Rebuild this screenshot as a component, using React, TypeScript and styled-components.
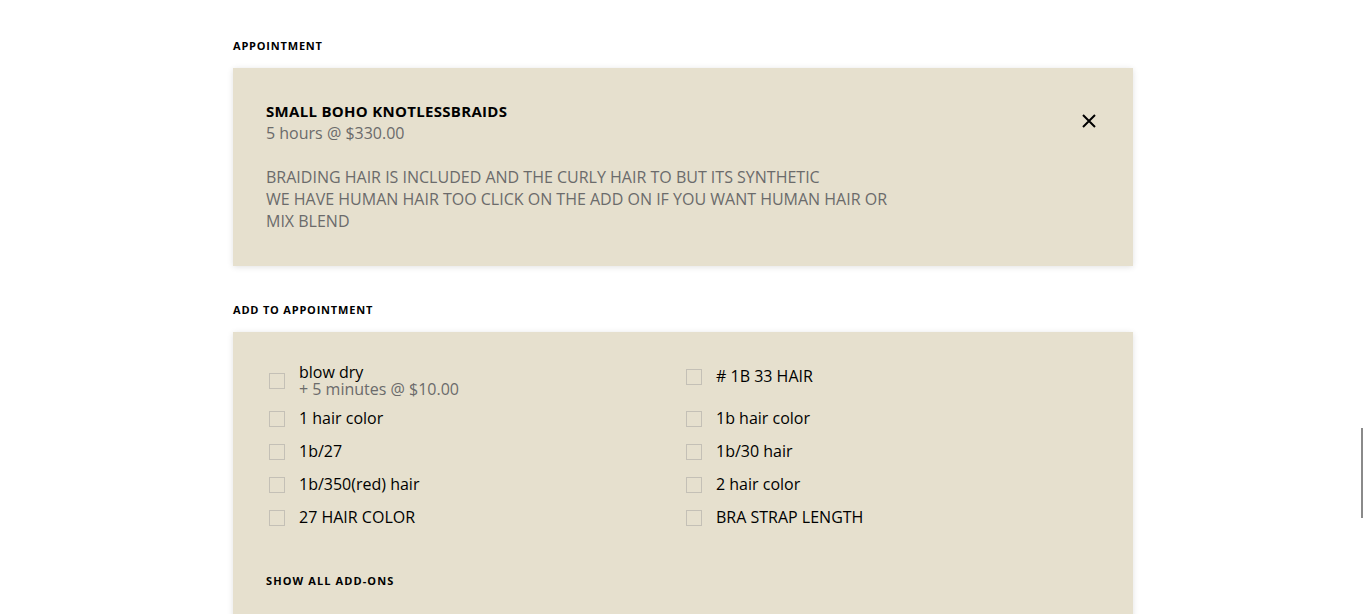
import React from "react";
import styled, { createGlobalStyle } from "styled-components";

const Global = createGlobalStyle`
  html, body { margin: 0; padding: 0; background: #fff; }
  body { font-family: "Open Sans", "Liberation Sans", sans-serif; color: #000; overflow: hidden; }
  * { box-sizing: border-box; }
`;

const Page = styled.main`
  width: 900px;
  margin: 0 auto;
  padding-top: 37px;
`;

const SectionLabel = styled.h2`
  margin: 0 0 13px;
  font-size: 11px;
  line-height: 18px;
  font-weight: 700;
  letter-spacing: 0.8px;
  text-transform: uppercase;
  color: #000;
`;

const Card = styled.section<{ $pad: string }>`
  background: #e6e0ce;
  box-shadow: 0 1px 6px rgba(0, 0, 0, 0.12);
  padding: ${(p) => p.$pad};
`;

const ServiceHead = styled.div`
  display: flex;
  justify-content: space-between;
  align-items: flex-start;
`;

const Title = styled.div`
  font-size: 15px;
  line-height: 22px;
  font-weight: 700;
  letter-spacing: 0.3px;
  color: #000;
`;

const Sub = styled.div`
  font-size: 16px;
  line-height: 22px;
  color: #6b6b6b;
`;

const Desc = styled.p`
  margin: 22px 0 0;
  font-size: 16px;
  line-height: 22px;
  color: #6b6b6b;
  max-width: 630px;
`;

const Close = styled.button`
  border: 0;
  background: transparent;
  padding: 0;
  margin: 11px 1px 0 0;
  width: 20px;
  height: 20px;
  display: flex;
  align-items: center;
  justify-content: center;
  cursor: pointer;
`;

const Spacer = styled.div`
  height: 35px;
`;

const AddGrid = styled.div`
  display: grid;
  grid-template-columns: 417px 417px;
  row-gap: 8px;
  align-items: start;
`;

const Item = styled.label`
  display: flex;
  align-items: center;
  min-height: 25px;
  padding-left: 3px;
  cursor: pointer;
`;

const Box = styled.span`
  width: 16px;
  height: 16px;
  border: 1px solid #c4c0b6;
  background: transparent;
  flex: none;
  margin-right: 14px;
`;

const ItemText = styled.span`
  display: flex;
  flex-direction: column;
`;

const ItemName = styled.span<{ $tight?: boolean }>`
  font-size: 16px;
  line-height: ${(p) => (p.$tight ? "17px" : "25px")};
  color: #000;
`;

const ItemMeta = styled.span`
  font-size: 16px;
  line-height: 17px;
  color: #6b6b6b;
`;

const ShowAll = styled.button`
  margin-top: 43px;
  border: 0;
  background: transparent;
  padding: 0;
  font-family: inherit;
  font-size: 11px;
  line-height: 15px;
  font-weight: 700;
  letter-spacing: 1.1px;
  text-transform: uppercase;
  color: #000;
  cursor: pointer;
`;

const ScrollThumb = styled.div`
  position: fixed;
  right: 3px;
  top: 428px;
  width: 2px;
  height: 90px;
  background: #8a8a8a;
`;

const addOns: { name: string; meta?: string }[] = [
  { name: "blow dry", meta: "+ 5 minutes @ $10.00" },
  { name: "# 1B 33 HAIR" },
  { name: "1 hair color" },
  { name: "1b hair color" },
  { name: "1b/27" },
  { name: "1b/30 hair" },
  { name: "1b/350(red) hair" },
  { name: "2 hair color" },
  { name: "27 HAIR COLOR" },
  { name: "BRA STRAP LENGTH" },
];

export default function App() {
  return (
    <>
      <Global />
      <Page>
        <SectionLabel>Appointment</SectionLabel>
        <Card $pad="32px 33px 34px">
          <ServiceHead>
            <div>
              <Title>SMALL BOHO KNOTLESSBRAIDS</Title>
              <Sub>5 hours @ $330.00</Sub>
            </div>
            <Close aria-label="Remove">
              <svg width="14" height="14" viewBox="0 0 14 14">
                <path d="M1 1L13 13M13 1L1 13" stroke="#000" strokeWidth="2" />
              </svg>
            </Close>
          </ServiceHead>
          <Desc>
            BRAIDING HAIR IS INCLUDED AND THE CURLY HAIR TO BUT ITS SYNTHETIC
            <br />
            WE HAVE HUMAN HAIR TOO CLICK ON THE ADD ON IF YOU WANT HUMAN HAIR OR MIX BLEND
          </Desc>
        </Card>
        <Spacer />
        <SectionLabel>Add to appointment</SectionLabel>
        <Card $pad="32px 33px 40px">
          <AddGrid>
            {addOns.map((a) => (
              <Item key={a.name}>
                <Box />
                <ItemText>
                  <ItemName $tight={!!a.meta}>{a.name}</ItemName>
                  {a.meta && <ItemMeta>{a.meta}</ItemMeta>}
                </ItemText>
              </Item>
            ))}
          </AddGrid>
          <ShowAll>Show all add-ons</ShowAll>
        </Card>
      </Page>
      <ScrollThumb />
    </>
  );
}
